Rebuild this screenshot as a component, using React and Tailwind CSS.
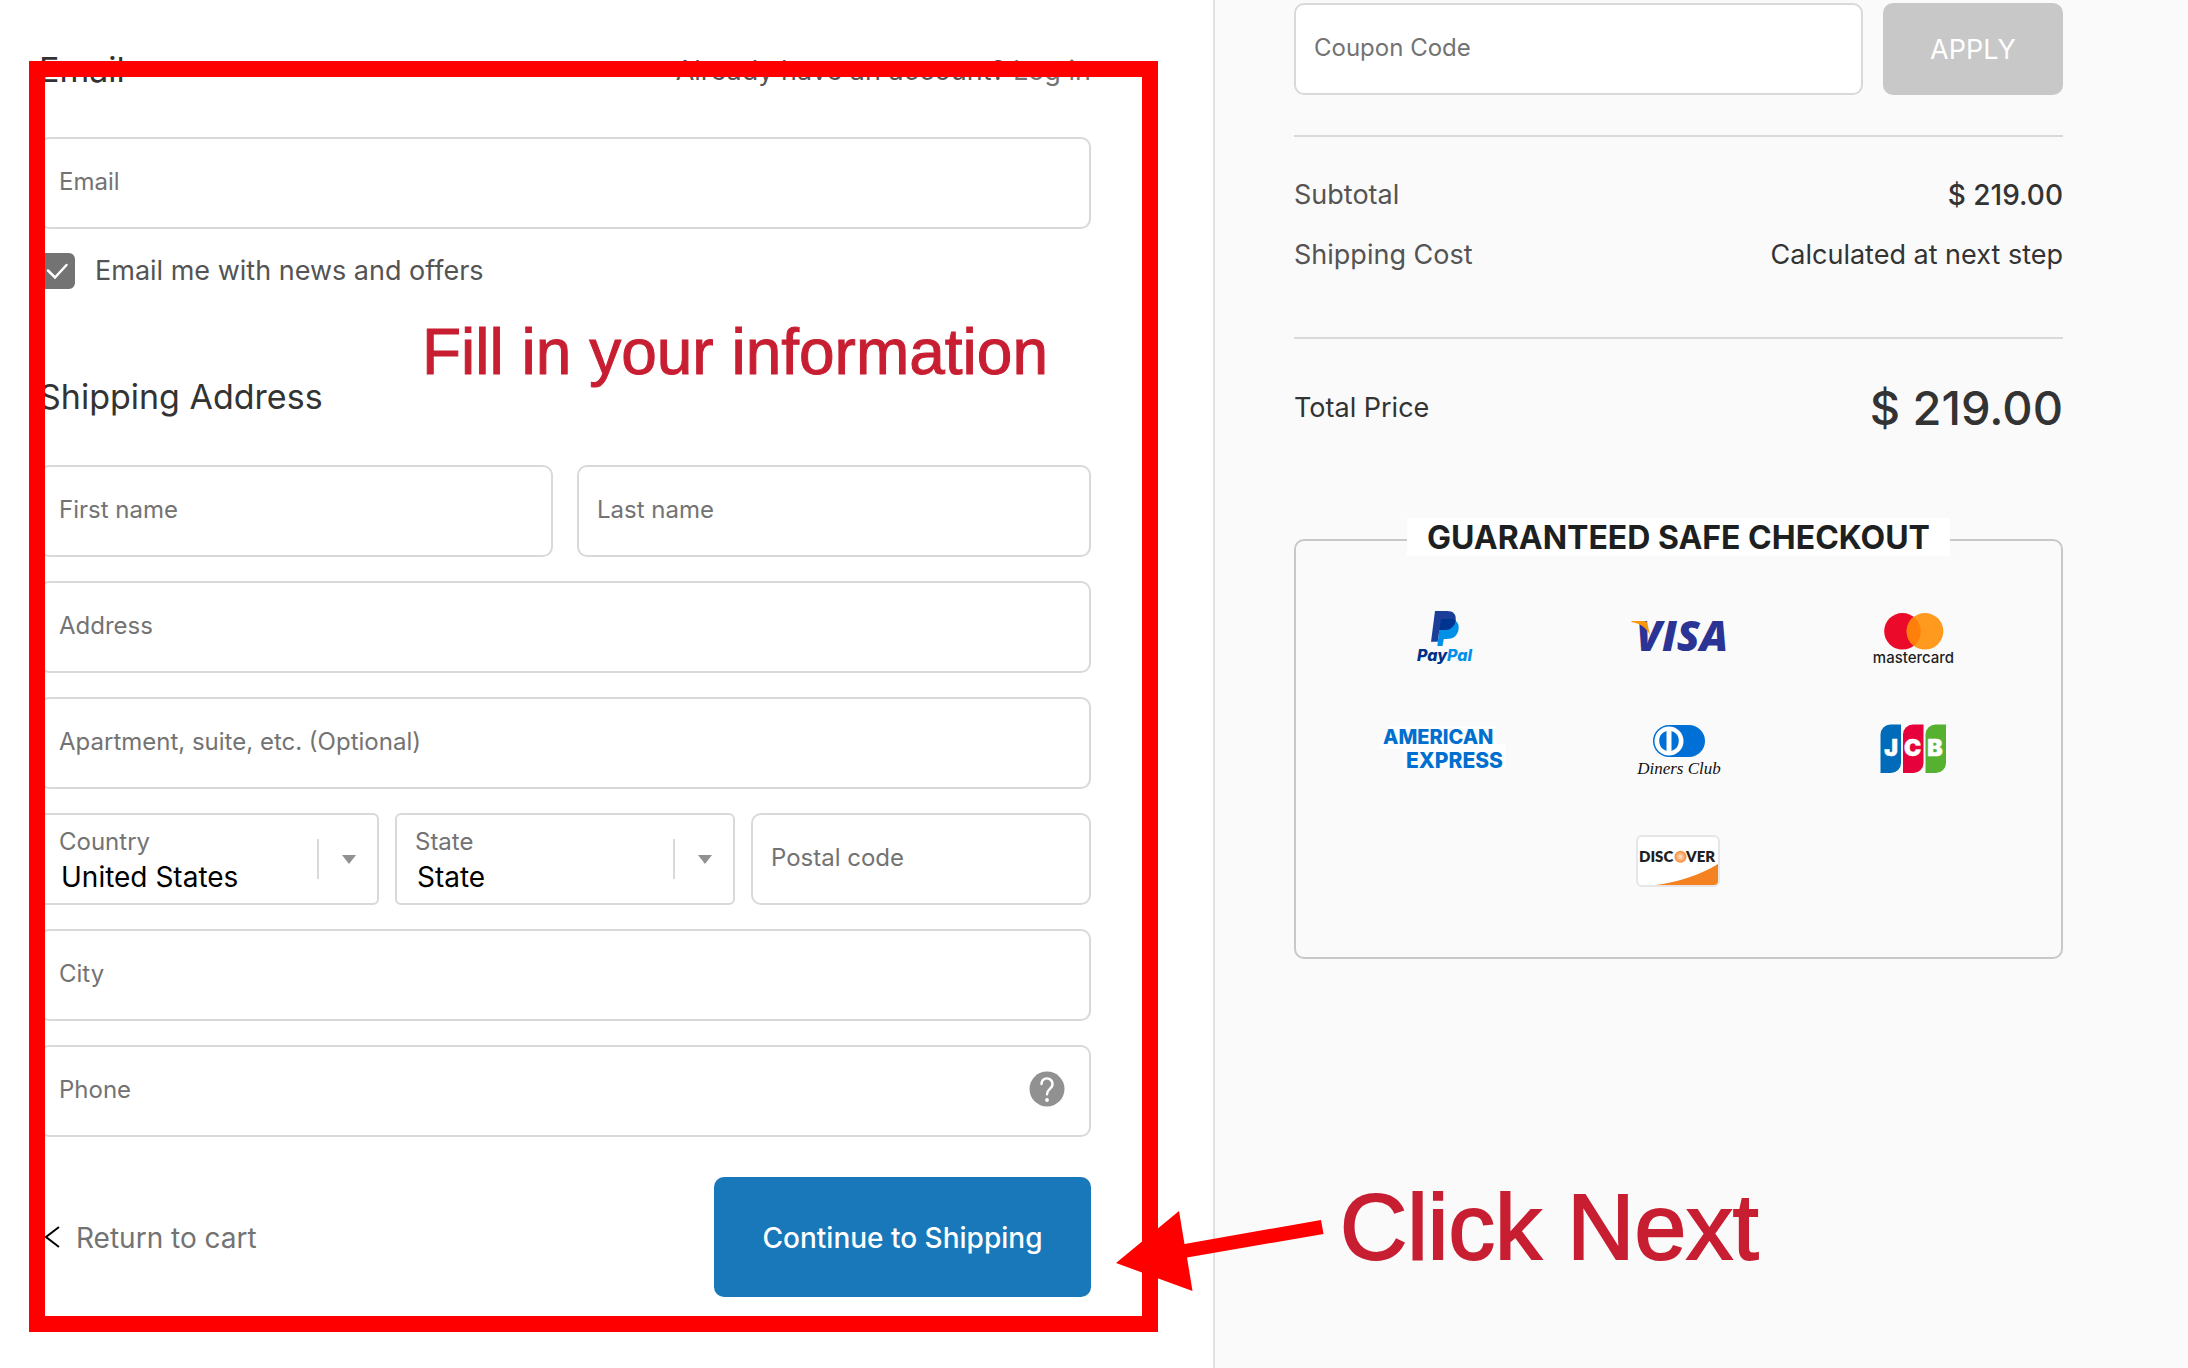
import React, { useState } from "react";

function Field({ id, label, type = "text", value, onChange }) {
  return (
    <input
      id={id}
      name={id}
      type={type}
      aria-label={label}
      placeholder={label}
      value={value}
      onChange={onChange}
      className="block h-[92px] w-full min-w-0 rounded-[10px] border-2 border-[#d9d9d9] bg-white px-[18px] pb-[3px] text-2xl text-[#333333] placeholder:text-[#737373] placeholder:opacity-100"
    />
  );
}

function SelectField({ id, label, value, options, onChange }) {
  return (
    <div className="relative h-[92px] rounded-md border-2 border-[#d9d9d9] bg-white">
      <label
        htmlFor={id}
        className="absolute top-[11px] left-[18px] text-2xl text-[#737373]"
      >
        {label}
      </label>
      <select
        id={id}
        name={id}
        value={value}
        onChange={onChange}
        className="h-full w-full appearance-none bg-transparent pt-9 pl-5 text-[28px] text-black"
      >
        {options.map((option) => (
          <option key={option}>{option}</option>
        ))}
      </select>
      <div className="pointer-events-none absolute inset-y-0 right-0 flex w-[60px] items-center">
        <span className="h-10 w-0.5 bg-[#d9d9d9]" />
        <svg viewBox="0 0 14 9" className="ml-[23px] h-[9px] w-[14px]">
          <path d="M0 0h14L7 9z" fill="#919191" />
        </svg>
      </div>
    </div>
  );
}

function PayPal() {
  return (
    <svg viewBox="0 0 140 60" className="h-[60px] w-[140px]" role="img" aria-label="PayPal">
      <path d="M66.500 13H80c3.800 1.800 5.200 5 4.600 9-1 7-5.600 10-12 10h-2.800L68.500 39H63.300z" fill="#0090e8" />
      <path d="M61 4h12c6.200 0 9.600 3.200 8.600 9.500-1 6.300-5.400 9.500-12 9.500h-4.200l-1.700 11.700H57z" fill="#1b3f99" />
      <path d="M66.800 13 65.400 23h4.200c6.600 0 11-3.200 12-9.500v-.6c-1.200-.6-2.700-.9-4.300-.9H68c-.7 0-1.100.3-1.200 1z" fill="#003491" />
      <text x="43" y="54" fontSize="16" fontWeight="800" fontStyle="italic" fontFamily="Inter" fill="#003087">
        Pay<tspan fill="#0090e8">Pal</tspan>
      </text>
    </svg>
  );
}

function Visa() {
  return (
    <svg viewBox="0 0 140 60" className="h-[60px] w-[140px]" role="img" aria-label="Visa">
      <text x="28" y="44" fontSize="42" fontWeight="800" fontStyle="italic" fontFamily="Open Sans" fill="#2b3494">
        VISA
      </text>
      <path d="M23.500 14H36c2 0 3 .8 3.500 3l2.600 11.500C38.500 21 33 16.500 23.500 15z" fill="#f7980a" />
    </svg>
  );
}

function Mastercard() {
  return (
    <svg viewBox="0 0 140 60" className="h-[60px] w-[140px]" role="img" aria-label="mastercard">
      <circle cx="59.500" cy="24.300" r="18.300" fill="#eb0a29" />
      <circle cx="82" cy="24.300" r="18.300" fill="#ff9a1f" />
      <path d="M70.700 9.800a18.300 18.300 0 0 1 0 29 18.300 18.300 0 0 1 0-29z" fill="#ff7f0b" />
      <text x="70.500" y="56" textAnchor="middle" fontSize="15" fontWeight="500" fontFamily="Inter" fill="#1f1f1f">
        mastercard
      </text>
    </svg>
  );
}

function Amex() {
  return (
    <svg viewBox="0 0 140 60" className="h-[60px] w-[140px]" role="img" aria-label="American Express">
      <path d="M14 7h108v18h10v24H29V30H5z" fill="#ffffff" opacity="0.7" />
      <g fontWeight="800" fontFamily="Inter" fill="#006fcf">
        <text x="9" y="25" fontSize="20">AMERICAN</text>
        <text x="32" y="49" fontSize="21">EXPRESS</text>
      </g>
    </svg>
  );
}

function DinersClub() {
  return (
    <svg viewBox="0 0 140 60" className="h-[60px] w-[140px]" role="img" aria-label="Diners Club">
      <path d="M61 6h20a16 16 0 0 1 0 32H61a16 16 0 0 1 0-32z" fill="#006fd6" />
      <circle cx="61" cy="22" r="14.500" fill="#ffffff" />
      <path d="M58.500 12v20a10.500 10.500 0 0 1 0-20zM63.500 12v20a10.500 10.500 0 0 0 0-20z" fill="#006fd6" />
      <text x="71" y="55" textAnchor="middle" fontSize="17" fontStyle="italic" fontFamily="Liberation Serif" fill="#111111">
        Diners Club
      </text>
    </svg>
  );
}

function Jcb() {
  return (
    <svg viewBox="0 0 140 60" className="h-[60px] w-[140px]" role="img" aria-label="JCB">
      <path d="M47.500 5.500H58V44a10 10 0 0 1-10 10H37.500V15.500a10 10 0 0 1 10-10z" fill="#006bb8" />
      <path d="M70 5.500h10.500V44a10 10 0 0 1-10 10H60V15.500a10 10 0 0 1 10-10z" fill="#e6003c" />
      <path d="M92.500 5.500H103V44a10 10 0 0 1-10 10H82.500V15.500a10 10 0 0 1 10-10z" fill="#57b130" />
      <g fontSize="23" fontWeight="900" fontFamily="Inter" fill="#ffffff" stroke="#ffffff" strokeWidth="0.500" textAnchor="middle">
        <text x="48" y="37">J</text>
        <text x="69.500" y="37">C</text>
        <text x="92" y="37">B</text>
      </g>
    </svg>
  );
}

function Discover() {
  return (
    <svg viewBox="0 0 140 60" className="h-[60px] w-[140px]" role="img" aria-label="Discover">
      <defs>
        <radialGradient id="discoverDot">
          <stop offset="0" stopColor="#fde3cb" />
          <stop offset="1" stopColor="#f58a35" />
        </radialGradient>
      </defs>
      <rect x="29" y="5" width="82" height="50" rx="5" fill="#ffffff" stroke="#e6e6e6" strokeWidth="2" />
      <path d="M48 54c22-3 44-10 62-21v17a4 4 0 0 1-4 4z" fill="#f58220" />
      <g fontSize="15" fontWeight="800" fontFamily="Lato" fill="#231f20">
        <text x="31" y="31">DISC</text>
        <text x="78" y="31">VER</text>
      </g>
      <circle cx="72.500" cy="25.700" r="6" fill="url(#discoverDot)" />
    </svg>
  );
}

function SummaryRow({ label, children }) {
  return (
    <div className="flex h-10 items-center justify-between">
      <dt className="text-[27px] text-[#545454]">{label}</dt>
      <dd className="text-[27px] text-[#333333]">{children}</dd>
    </div>
  );
}

function App() {
  const [coupon, setCoupon] = useState("");
  const [formData, setFormData] = useState({
    email: "",
    news: true,
    firstName: "",
    lastName: "",
    address: "",
    apartment: "",
    country: "United States",
    state: "State",
    postalCode: "",
    city: "",
    phone: "",
  });

  const onChange = (e) => {
    const { name, type, checked, value } = e.target;
    setFormData((prev) => ({
      ...prev,
      [name]: type === "checkbox" ? checked : value,
    }));
  };

  return (
    <main className="grid min-h-screen grid-cols-[1213fr_975fr] bg-white font-['Inter',sans-serif]">
      <div className="relative pt-12 pr-[122px] pb-[71px] pl-[39px]">
        <form onSubmit={(e) => e.preventDefault()}>
          <div className="flex h-[42px] items-center justify-between">
            <h2 className="text-[34px] text-[#333333]">Email</h2>
            <p className="pt-1 text-[27px] text-[#545454]">
              Already have an account?{" "}
              <a href="#login" className="text-[#737373]">
                Log in
              </a>
            </p>
          </div>
          <div className="mt-[47px]">
            <Field id="email" type="email" label="Email" value={formData.email} onChange={onChange} />
          </div>
          <label className="mt-6 flex h-9 items-center gap-5 text-[27px] text-[#545454]">
            <span className="relative flex">
              <input
                type="checkbox"
                name="news"
                checked={formData.news}
                onChange={onChange}
                className="peer h-9 w-9 appearance-none rounded-md border-2 border-[#737373] bg-white checked:bg-[#737373]"
              />
              <svg
                viewBox="0 0 36 36"
                className="pointer-events-none absolute inset-0 hidden h-9 w-9 peer-checked:block"
              >
                <path
                  d="M9 17.500l7 7L27.500 12"
                  fill="none"
                  stroke="#ffffff"
                  strokeWidth="2.500"
                  strokeLinecap="round"
                />
              </svg>
            </span>
            Email me with news and offers
          </label>

          <h2 className="mt-[88px] text-[34px] leading-10 text-[#333333]">
            Shipping Address
          </h2>
          <div className="mt-12 grid gap-6">
            <div className="grid grid-cols-2 gap-6">
              <Field id="firstName" label="First name" value={formData.firstName} onChange={onChange} />
              <Field id="lastName" label="Last name" value={formData.lastName} onChange={onChange} />
            </div>
            <Field id="address" label="Address" value={formData.address} onChange={onChange} />
            <Field
              id="apartment"
              label="Apartment, suite, etc. (Optional)"
              value={formData.apartment}
              onChange={onChange}
            />
            <div className="grid grid-cols-3 gap-4">
              <SelectField
                id="country"
                label="Country"
                value={formData.country}
                options={["United States", "Canada"]}
                onChange={onChange}
              />
              <SelectField
                id="state"
                label="State"
                value={formData.state}
                options={["State", "California", "New York", "Texas"]}
                onChange={onChange}
              />
              <Field id="postalCode" label="Postal code" value={formData.postalCode} onChange={onChange} />
            </div>
            <Field id="city" label="City" value={formData.city} onChange={onChange} />
            <div className="relative">
              <Field id="phone" type="tel" label="Phone" value={formData.phone} onChange={onChange} />
              <button
                type="button"
                aria-label="Help"
                className="absolute inset-y-0 right-[26px] flex items-center pb-1"
              >
                <svg viewBox="0 0 36 36" className="h-9 w-9">
                  <circle cx="18" cy="18" r="17.500" fill="#919191" />
                  <path
                    d="M12.500 13a5.500 5.500 0 1 1 9.300 3.900c-1.900 1.900-3.800 3-3.800 6.300"
                    fill="none"
                    stroke="#ffffff"
                    strokeWidth="2.400"
                    strokeLinecap="round"
                  />
                  <circle cx="18" cy="29" r="1.900" fill="#ffffff" />
                </svg>
              </button>
            </div>
          </div>

          <div className="mt-10 flex items-center justify-between">
            <a href="#cart" className="flex items-center gap-4 text-[28px] text-[#737373]">
              <svg viewBox="0 0 21 22" className="h-[22px] w-[21px]">
                <path d="M20 1L7 11l13 10" fill="none" stroke="#000000" strokeWidth="2" />
              </svg>
              <span className="pt-0.5">Return to cart</span>
            </a>
            <button
              type="submit"
              className="h-[120px] w-[377px] rounded-[10px] bg-[#1878b9] pt-0.5 text-[28px] font-medium text-white"
            >
              Continue to Shipping
            </button>
          </div>
        </form>

        <div className="pointer-events-none absolute top-[61px] right-[55px] bottom-9 left-[29px] border-16 border-[#ff0000]" />
        <p className="pointer-events-none absolute top-[310px] right-[165px] font-['Liberation_Sans',sans-serif] text-[64px] leading-[84px] whitespace-nowrap text-[#c81e32] [-webkit-text-stroke:1px_#c81e32]">
          Fill in your information
        </p>
      </div>

      <aside className="relative border-l-2 border-[#e1e1e1] bg-[#fafafa] pt-[3px] pr-[125px] pl-[79px]">
        <form onSubmit={(e) => e.preventDefault()} className="flex gap-5">
          <Field id="coupon" label="Coupon Code" value={coupon} onChange={(e) => setCoupon(e.target.value)} />
          <button
            type="submit"
            className="h-[92px] w-[180px] shrink-0 rounded-[10px] bg-[#c8c8c8] pt-0.5 text-[27px] text-white"
          >
            APPLY
          </button>
        </form>

        <dl>
          <div className="mt-10 flex flex-col gap-5 border-y-2 border-[#d9d9d9] pt-[38px] pb-[62px]">
            <SummaryRow label="Subtotal">
              <span className="text-[28px] font-medium">$ 219.00</span>
            </SummaryRow>
            <SummaryRow label="Shipping Cost">Calculated at next step</SummaryRow>
          </div>
          <div className="flex h-[138px] items-center justify-between text-[#333333]">
            <dt className="text-[27px]">Total Price</dt>
            <dd className="text-[47px] font-medium">$ 219.00</dd>
          </div>
        </dl>

        <section className="mt-[62px] flex flex-col rounded-[10px] border-2 border-[#c8c8c8] px-[31px] pb-10">
          <h3 className="-mt-[23px] self-center bg-white px-5 pt-0.5 text-[32px] leading-9 font-bold text-[#1d1f21]">
            GUARANTEED SAFE CHECKOUT
          </h3>
          <ul className="mt-[25px] grid auto-rows-[112px] grid-cols-3 place-items-center">
            <li><PayPal /></li>
            <li><Visa /></li>
            <li><Mastercard /></li>
            <li><Amex /></li>
            <li><DinersClub /></li>
            <li><Jcb /></li>
            <li className="col-start-2"><Discover /></li>
          </ul>
        </section>

        <div className="pointer-events-none absolute top-[1168px] -left-[99px] flex whitespace-nowrap text-[#c81e32]">
          <svg viewBox="0 0 208 80" className="mt-[43px] h-20 w-[208px]">
            <path d="M0 52L63 0l5.500 33L205 9l2.500 14L71 46.500l5.500 33.500z" fill="#ff0000" />
          </svg>
          <p className="mt-0.5 ml-4 font-['Liberation_Sans',sans-serif] text-[93px] leading-[114px] [-webkit-text-stroke:2px_#c81e32]">
            Click Next
          </p>
        </div>
      </aside>
    </main>
  );
}

export default App;
